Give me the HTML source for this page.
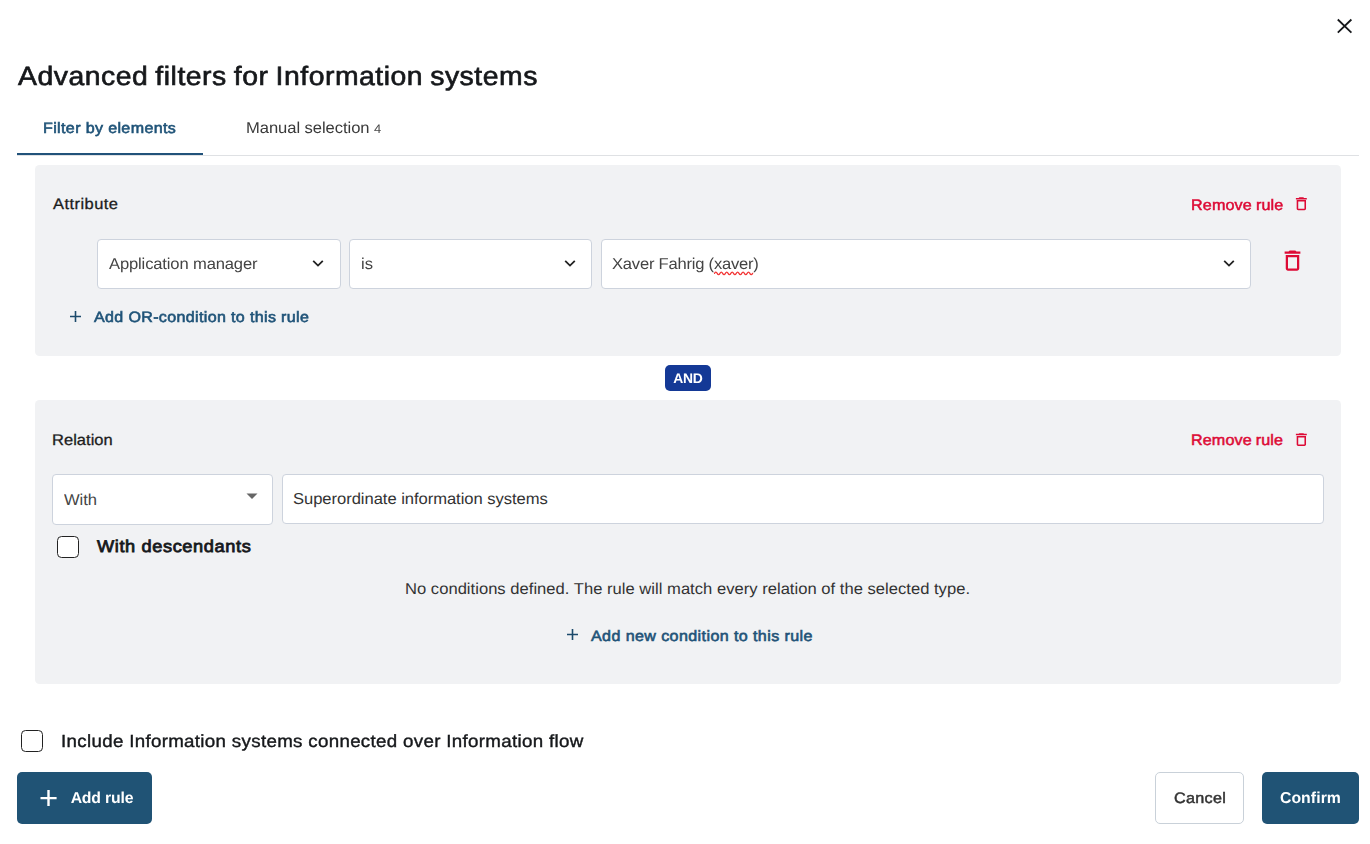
<!DOCTYPE html>
<html lang="en">
<head>
<meta charset="utf-8">
<title>Advanced filters for Information systems</title>
<style>
*{box-sizing:border-box;margin:0;padding:0}
html,body{width:1370px;height:844px;overflow:hidden;background:#fff}
body{font-family:"Liberation Sans",sans-serif;color:#1a1a1a;position:relative}
.abs{position:absolute}
.t{position:absolute;white-space:nowrap;line-height:1;text-rendering:geometricPrecision}
.panel{position:absolute;left:35px;width:1306px;background:#f1f2f4;border-radius:4.500px}
.box{position:absolute;background:#fff;border:1px solid #cdd3dd;border-radius:4px}
.cb{position:absolute;width:22px;height:22px;border:1.200px solid #222;border-radius:4.500px;background:#fff}
.btn{position:absolute;top:772px;height:52px;border-radius:5px}
</style>
</head>
<body>

<!-- close -->
<svg class="abs" style="left:1336px;top:18px" width="18" height="17" viewBox="0 0 18 17"><path d="M1.800 1.500 L15.400 14.700 M15.400 1.500 L1.800 14.700" stroke="#16181b" stroke-width="1.800" fill="none"/></svg>


<!-- tabs -->
<div class="abs" style="left:17px;top:155px;width:1342px;height:1px;background:#dfe1e4"></div>
<div class="abs" style="left:17px;top:153px;width:186px;height:2px;background:#21527a"></div>

<!-- panel 1 -->
<div class="panel" style="top:165px;height:191px"></div>
<div class="t" id="attr" style="left:53.00px;top:197.22px;font-size:15.4px;color:#1c1c1c;-webkit-text-stroke:0.3px #1c1c1c;letter-spacing:0.428px;transform:scaleX(1.07);transform-origin:0 0;">Attribute</div>
<svg class="abs" style="left:1291.600px;top:194.600px" width="18.700" height="17.500" viewBox="0 0 24 24" preserveAspectRatio="none"><path fill="#dd0a35" d="M6 19c0 1.100.900 2 2 2h8c1.100 0 2-.900 2-2V7H6v12zM8 9h8v10H8V9zm7.500-5l-1-1h-5l-1 1H5v2h14V4h-3.500z"/></svg>

<div class="box" style="left:97px;top:239px;width:244px;height:50px"></div>
<svg class="abs" style="left:312px;top:258.600px" width="12" height="10" viewBox="0 0 12 10"><path d="M1.200 1.800 L6 6.600 L10.800 1.800" stroke="#222" stroke-width="1.800" fill="none"/></svg>

<div class="box" style="left:349px;top:239px;width:243px;height:50px"></div>
<svg class="abs" style="left:564px;top:258.600px" width="12" height="10" viewBox="0 0 12 10"><path d="M1.200 1.800 L6 6.600 L10.800 1.800" stroke="#222" stroke-width="1.800" fill="none"/></svg>

<div class="box" style="left:601px;top:239px;width:650px;height:50px"></div>
<svg class="abs" style="left:713.500px;top:270.400px" width="41" height="7" viewBox="0 0 41 7"><path d="M0.500 3.400 q1.360 -2.500 2.720 0 t2.720 0 t2.720 0 t2.720 0 t2.720 0 t2.720 0 t2.720 0 t2.720 0 t2.720 0 t2.720 0 t2.720 0 t2.720 0 t2.720 0 t2.720 0" stroke="#f23535" stroke-width="1.300" fill="none" stroke-linecap="round"/></svg>
<svg class="abs" style="left:1223px;top:258.600px" width="12" height="10" viewBox="0 0 12 10"><path d="M1.200 1.800 L6 6.600 L10.800 1.800" stroke="#222" stroke-width="1.800" fill="none"/></svg>

<svg class="abs" style="left:1279px;top:247px" width="27" height="27" viewBox="0 0 24 24"><path fill="#dd0a35" d="M6 19c0 1.100.900 2 2 2h8c1.100 0 2-.900 2-2V7H6v12zM8 9h8v10H8V9zm7.500-5l-1-1h-5l-1 1H5v2h14V4h-3.500z"/></svg>

<svg class="abs" style="left:69px;top:310px" width="13" height="13" viewBox="0 0 13 13"><path d="M6.500 1 V12 M1 6.500 H12" stroke="#1c4a6b" stroke-width="1.600" fill="none"/></svg>

<!-- AND -->
<div class="abs" style="left:665px;top:365px;width:46px;height:26px;border-radius:5px;background:#143996"></div>

<!-- panel 2 -->
<div class="panel" style="top:400px;height:284px"></div>
<div class="t" id="rel" style="left:52.00px;top:432.84px;font-size:15.4px;color:#1c1c1c;-webkit-text-stroke:0.3px #1c1c1c;letter-spacing:0.042px;transform:scaleX(1.07);transform-origin:0 0;">Relation</div>
<div class="t" id="rm2" style="left:1191.00px;top:432.76px;font-size:15.1px;color:#dd0a35;-webkit-text-stroke:0.5px #dd0a35;letter-spacing:0.098px;word-spacing:-0.600px;transform:scaleX(1.07);transform-origin:0 0;">Remove rule</div>
<svg class="abs" style="left:1291.500px;top:430.700px" width="18.700" height="17.100" viewBox="0 0 24 24" preserveAspectRatio="none"><path fill="#dd0a35" d="M6 19c0 1.100.900 2 2 2h8c1.100 0 2-.900 2-2V7H6v12zM8 9h8v10H8V9zm7.500-5l-1-1h-5l-1 1H5v2h14V4h-3.500z"/></svg>

<div class="box" style="left:52px;top:474px;width:221px;height:51px"></div>
<div class="t" id="with" style="left:64.00px;top:493.23px;font-size:15.8px;color:#444;letter-spacing:-0.096px;transform:scaleX(1.05);transform-origin:0 0;">With</div>
<svg class="abs" style="left:246px;top:493px" width="12" height="6" viewBox="0 0 12 6"><path d="M0.500 0.500 L11.500 0.500 L6 6 Z" fill="#666"/></svg>

<div class="box" style="left:282px;top:474px;width:1042px;height:50px"></div>
<div class="t" id="sup" style="left:293.00px;top:492.27px;font-size:15.8px;color:#333;letter-spacing:-0.046px;transform:scaleX(1.05);transform-origin:0 0;">Superordinate information systems</div>

<div class="cb" style="left:57px;top:536px"></div>
<div class="t" id="wd" style="left:97.00px;top:538.21px;font-size:17.0px;color:#16181b;-webkit-text-stroke:0.8px #16181b;letter-spacing:0.572px;transform:scaleX(1.07);transform-origin:0 0;">With descendants</div>

<div class="t" id="nocond" style="left:405.00px;top:581.93px;font-size:15.8px;color:#333;letter-spacing:0.013px;transform:scaleX(1.05);transform-origin:0 0;">No conditions defined. The rule will match every relation of the selected type.</div>

<svg class="abs" style="left:566px;top:627.700px" width="13" height="13" viewBox="0 0 13 13"><path d="M6.500 1 V12 M1 6.500 H12" stroke="#1c4a6b" stroke-width="1.600" fill="none"/></svg>
<div class="t" id="addnew" style="left:591.00px;top:629.32px;font-size:15.0px;color:#1f5378;-webkit-text-stroke:0.6px #1f5378;letter-spacing:0.378px;transform:scaleX(1.07);transform-origin:0 0;">Add new condition to this rule</div>

<!-- include -->
<div class="cb" style="left:21px;top:730px"></div>

<!-- buttons -->
<div class="btn" style="left:17px;width:135px;background:#205375"></div>
<svg class="abs" style="left:40px;top:790px" width="17" height="16" viewBox="0 0 17 16"><path d="M8.500 0 V16.200 M0.500 8.100 H16.600" stroke="#fff" stroke-width="2.400" fill="none"/></svg>

<div class="btn" style="left:1155px;width:89px;background:#fff;border:1px solid #c9d1d9"></div>

<div class="btn" style="left:1262px;width:97px;background:#205375"></div>

<!-- text painted on its own transparent layer (greyscale AA) -->
<div class="abs" style="left:0;top:0;width:1370px;height:844px;will-change:transform;pointer-events:none">
<div class="t" id="title" style="left:18.00px;top:62.67px;font-size:26.5px;color:#16181b;-webkit-text-stroke:0.65px #16181b;letter-spacing:0.483px;word-spacing:-1.200px;transform:scaleX(1.07);transform-origin:0 0;">Advanced filters for Information systems</div>
<div class="t" id="tab1" style="left:43.00px;top:120.76px;font-size:15.0px;color:#1f5378;-webkit-text-stroke:0.6px #1f5378;letter-spacing:0.338px;transform:scaleX(1.07);transform-origin:0 0;">Filter by elements</div>
<div class="t" id="tab2" style="left:246.00px;top:120.63px;font-size:15.8px;color:#3a3a3a;letter-spacing:-0.056px;transform:scaleX(1.05);transform-origin:0 0;">Manual selection</div>
<div class="t" id="tab2n" style="left:374.00px;top:123.30px;font-size:12.4px;color:#4a4a4a;transform:scaleX(1.05);transform-origin:0 0;">4</div>
<div class="t" id="rm1" style="left:1191.00px;top:197.50px;font-size:15.1px;color:#dd0a35;-webkit-text-stroke:0.5px #dd0a35;letter-spacing:0.126px;word-spacing:-0.600px;transform:scaleX(1.07);transform-origin:0 0;">Remove rule</div>
<div class="t" id="s1" style="left:109.00px;top:257.13px;font-size:15.8px;color:#444;letter-spacing:-0.141px;transform:scaleX(1.05);transform-origin:0 0;">Application manager</div>
<div class="t" id="s2" style="left:361.00px;top:257.13px;font-size:15.8px;color:#444;transform:scaleX(1.05);transform-origin:0 0;">is</div>
<div class="t" id="s3" style="left:612.00px;top:257.13px;font-size:15.8px;color:#444;letter-spacing:-0.216px;transform:scaleX(1.05);transform-origin:0 0;">Xaver Fahrig (xaver)</div>
<div class="t" id="or" style="left:94.00px;top:309.78px;font-size:15.0px;color:#1f5378;-webkit-text-stroke:0.6px #1f5378;letter-spacing:0.324px;transform:scaleX(1.07);transform-origin:0 0;">Add OR-condition to this rule</div>
<div class="t" id="and" style="left:673.31px;top:371.73px;font-size:13.9px;color:#fff;font-weight:bold;letter-spacing:-0.297px;">AND</div>
<div class="t" id="incl" style="left:61.00px;top:732.99px;font-size:17.5px;color:#16181b;-webkit-text-stroke:0.4px #16181b;letter-spacing:0.298px;transform:scaleX(1.07);transform-origin:0 0;">Include Information systems connected over Information flow</div>
<div class="t" id="addrule" style="left:70.64px;top:790.63px;font-size:15.8px;color:#fff;font-weight:bold;letter-spacing:-0.163px;">Add rule</div>
<div class="t" id="cancel" style="left:1174.00px;top:791.02px;font-size:15.1px;color:#333;-webkit-text-stroke:0.5px #333;letter-spacing:0.291px;transform:scaleX(1.07);transform-origin:0 0;">Cancel</div>
<div class="t" id="confirm" style="left:1279.93px;top:791.11px;font-size:15.8px;color:#fff;font-weight:bold;letter-spacing:0.070px;">Confirm</div>
</div>

</body>
</html>
